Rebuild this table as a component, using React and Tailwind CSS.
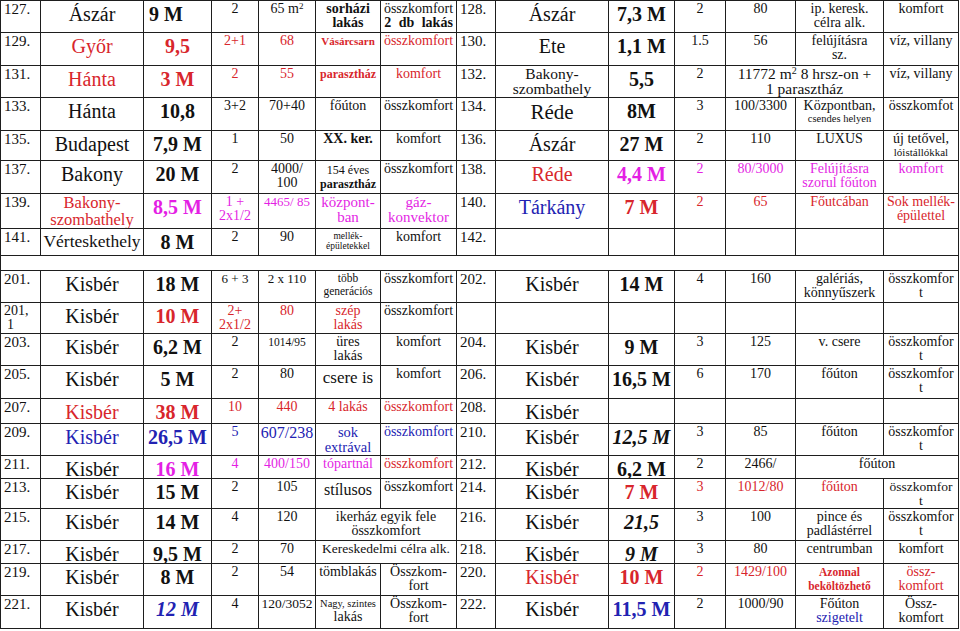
import React from "react";

// colours used in the listing
const R = "text-[#d8262c]";
const M = "text-[#e41fe4]";
const B = "text-[#2222b2]";

const num = "text-left pl-[3px] text-[15px] leading-[16px]";
const city = "text-[20px] leading-[16px] pt-[5px]";
const price = "font-bold text-[20px] leading-[16px] pt-[5px]";
const sm = "text-[14px] leading-[14px] pt-[1px]";

const C = ({ c = "", span = 1, children }) => (
  <td
    colSpan={span}
    className={`border border-[#1e1e1e] p-0 align-top text-center overflow-hidden ${c}`}
  >
    {children}
  </td>
);

const Br = () => <br />;

const App = () => {
  return (
    <div className="w-[960px] h-[631px] bg-white overflow-hidden">
      <table className="table-fixed border-collapse w-[958px] font-['Liberation_Serif',serif] text-[#111]">
        <colgroup>
          <col className="w-[40px]" />
          <col className="w-[103px]" />
          <col className="w-[68px]" />
          <col className="w-[47px]" />
          <col className="w-[57px]" />
          <col className="w-[65px]" />
          <col className="w-[76px]" />
          <col className="w-[39px]" />
          <col className="w-[113px]" />
          <col className="w-[66px]" />
          <col className="w-[51px]" />
          <col className="w-[70px]" />
          <col className="w-[88px]" />
          <col className="w-[75px]" />
        </colgroup>
        <tbody>
          {/* 127 / 128 */}
          <tr className="h-[32px]">
            <C c={num}>127.</C>
            <C c={city}>Ászár</C>
            <C c={`${price} text-left pl-[5px]`}>9 M</C>
            <C c={sm}>2</C>
            <C c={sm}>
              65 m<sup className="text-[9px]">2</sup>
            </C>
            <C c={`${sm} font-bold`}>
              sorházi
              <Br />
              lakás
            </C>
            <C c={sm}>
              összkomfort
              <Br />
              <span className="font-bold [word-spacing:4px]">2 db lakás</span>
            </C>
            <C c={num}>128.</C>
            <C c={city}>Ászár</C>
            <C c={price}>7,3 M</C>
            <C c={sm}>2</C>
            <C c={sm}>80</C>
            <C c={sm}>
              ip. keresk.
              <Br />
              célra alk.
            </C>
            <C c={sm}>komfort</C>
          </tr>

          {/* 129 / 130 */}
          <tr className="h-[33px]">
            <C c={num}>129.</C>
            <C c={`${city} ${R}`}>Győr</C>
            <C c={`${price} ${R}`}>9,5</C>
            <C c={`${sm} ${R}`}>2+1</C>
            <C c={`${sm} ${R}`}>68</C>
            <C c={`text-[11px] leading-[12px] pt-[2px] font-bold ${R}`}>Vásárcsarn</C>
            <C c={`${sm} ${R}`}>összkomfort</C>
            <C c={num}>130.</C>
            <C c={city}>Ete</C>
            <C c={price}>1,1 M</C>
            <C c={sm}>1.5</C>
            <C c={sm}>56</C>
            <C c={sm}>
              felújításra
              <Br />
              sz.
            </C>
            <C c={sm}>víz, villany</C>
          </tr>

          {/* 131 / 132 */}
          <tr className="h-[32px]">
            <C c={num}>131.</C>
            <C c={`${city} ${R}`}>Hánta</C>
            <C c={`${price} ${R}`}>3 M</C>
            <C c={`${sm} ${R}`}>2</C>
            <C c={`${sm} ${R}`}>55</C>
            <C c={`text-[12px] leading-[13px] pt-[2px] font-bold ${R}`}>parasztház</C>
            <C c={`${sm} ${R}`}>komfort</C>
            <C c={num}>132.</C>
            <C c="text-[15.5px] leading-[15px]">
              Bakony-
              <Br />
              szombathely
            </C>
            <C c={price}>5,5</C>
            <C c={sm}>2</C>
            <C span={2} c="text-[15.5px] leading-[15px]">
              11772 m<sup className="text-[10px]">2</sup> 8 hrsz-on +
              <Br />1 parasztház
            </C>
            <C c={sm}>víz, villany</C>
          </tr>

          {/* 133 / 134 */}
          <tr className="h-[33px]">
            <C c={num}>133.</C>
            <C c={city}>Hánta</C>
            <C c={price}>10,8</C>
            <C c={sm}>3+2</C>
            <C c={sm}>70+40</C>
            <C c={sm}>főúton</C>
            <C c={sm}>összkomfort</C>
            <C c={num}>134.</C>
            <C c="text-[21px] leading-[16px] pt-[6px]">Réde</C>
            <C c={price}>8M</C>
            <C c={sm}>3</C>
            <C c={sm}>100/3300</C>
            <C c={sm}>
              <div>Központban,</div>
              <div className="text-[10.5px] leading-[12px]">csendes helyen</div>
            </C>
            <C c={sm}>összkomfot</C>
          </tr>

          {/* 135 / 136 */}
          <tr className="h-[30px]">
            <C c={num}>135.</C>
            <C c={city}>Budapest</C>
            <C c={price}>7,9 M</C>
            <C c={sm}>1</C>
            <C c={sm}>50</C>
            <C c={`${sm} font-bold`}>XX. ker.</C>
            <C c={sm}>komfort</C>
            <C c={num}>136.</C>
            <C c={city}>Ászár</C>
            <C c={price}>27 M</C>
            <C c={sm}>2</C>
            <C c={sm}>110</C>
            <C c={sm}>LUXUS</C>
            <C c={sm}>
              <div>új tetővel,</div>
              <div className="text-[11px] leading-[12px]">lóistállókkal</div>
            </C>
          </tr>

          {/* 137 / 138 */}
          <tr className="h-[33px]">
            <C c={num}>137.</C>
            <C c={city}>Bakony</C>
            <C c={price}>20 M</C>
            <C c={sm}>2</C>
            <C c={sm}>
              4000/
              <Br />
              100
            </C>
            <C c="text-[12px] leading-[14px] pt-[2px]">
              <div>154 éves</div>
              <div className="font-bold">parasztház</div>
            </C>
            <C c={sm}>összkomfort</C>
            <C c={num}>138.</C>
            <C c={`${city} ${R}`}>Réde</C>
            <C c={`${price} ${M}`}>4,4 M</C>
            <C c={`${sm} ${M}`}>2</C>
            <C c={`${sm} ${M}`}>80/3000</C>
            <C c={`${sm} ${M}`}>
              Felújításra
              <Br />
              szorul főúton
            </C>
            <C c={`${sm} ${M}`}>komfort</C>
          </tr>

          {/* 139 / 140 */}
          <tr className="h-[35px]">
            <C c={num}>139.</C>
            <C c={`text-[16.5px] leading-[16.5px] pt-[1px] ${R}`}>
              Bakony-
              <Br />
              szombathely
            </C>
            <C c={`${price} ${M}`}>8,5 M</C>
            <C c={`${sm} ${M}`}>
              1 +
              <Br />
              2x1/2
            </C>
            <C c={`text-[13px] leading-[14px] pt-[1px] ${M}`}>4465/ 85</C>
            <C c={`text-[15px] leading-[15px] pt-[1px] ${M}`}>
              központ-
              <Br />
              ban
            </C>
            <C c={`text-[15px] leading-[15px] pt-[1px] ${M}`}>
              gáz-
              <Br />
              konvektor
            </C>
            <C c={num}>140.</C>
            <C c={`${city} ${B}`}>Tárkány</C>
            <C c={`${price} ${R}`}>7 M</C>
            <C c={`${sm} ${R}`}>2</C>
            <C c={`${sm} ${R}`}>65</C>
            <C c={`${sm} ${R}`}>Főutcában</C>
            <C c={`${sm} ${R}`}>
              Sok mellék-
              <Br />
              épülettel
            </C>
          </tr>

          {/* 141 / 142 */}
          <tr className="h-[27px]">
            <C c={num}>141.</C>
            <C c="text-[17.5px] leading-[16px] pt-[4px]">Vérteskethely</C>
            <C c={price}>8 M</C>
            <C c={sm}>2</C>
            <C c={sm}>90</C>
            <C c="text-[9.5px] leading-[10px] pt-[2px]">
              mellék-
              <Br />
              épületekkel
            </C>
            <C c={sm}>komfort</C>
            <C c={num}>142.</C>
            <C />
            <C />
            <C />
            <C />
            <C />
            <C />
          </tr>

          {/* gap between the two lists */}
          <tr className="h-[15px]">
            <C span={14} />
          </tr>

          {/* 201 / 202 */}
          <tr className="h-[32px]">
            <C c={num}>201.</C>
            <C c={city}>Kisbér</C>
            <C c={price}>18 M</C>
            <C c="text-[13px] leading-[14px] pt-[1px]">6 + 3</C>
            <C c="text-[13px] leading-[14px] pt-[1px]">2 x 110</C>
            <C c="text-[11.5px] leading-[13px] pt-[1px]">
              több
              <Br />
              generációs
            </C>
            <C c={sm}>összkomfort</C>
            <C c={num}>202.</C>
            <C c={city}>Kisbér</C>
            <C c={price}>14 M</C>
            <C c={sm}>4</C>
            <C c={sm}>160</C>
            <C c={sm}>
              galériás,
              <Br />
              könnyűszerk
            </C>
            <C c={sm}>
              összkomfor
              <Br />t
            </C>
          </tr>

          {/* 201,1 */}
          <tr className="h-[31px]">
            <C c="text-left pl-[3px] text-[14px] leading-[14px] pt-[1px]">
              201,
              <Br />
              <span className="pl-[3px]">1</span>
            </C>
            <C c={city}>Kisbér</C>
            <C c={`${price} ${R}`}>10 M</C>
            <C c={`${sm} ${R}`}>
              2+
              <Br />
              2x1/2
            </C>
            <C c={`${sm} ${R}`}>80</C>
            <C c={`${sm} ${R}`}>
              szép
              <Br />
              lakás
            </C>
            <C c={sm}>összkomfort</C>
            <C />
            <C />
            <C />
            <C />
            <C />
            <C />
            <C />
          </tr>

          {/* 203 / 204 */}
          <tr className="h-[32px]">
            <C c={num}>203.</C>
            <C c={city}>Kisbér</C>
            <C c={price}>6,2 M</C>
            <C c={sm}>2</C>
            <C c="text-[11.5px] leading-[14px] pt-[1px]">1014/95</C>
            <C c={sm}>
              üres
              <Br />
              lakás
            </C>
            <C c={sm}>komfort</C>
            <C c={num}>204.</C>
            <C c={city}>Kisbér</C>
            <C c={price}>9 M</C>
            <C c={sm}>3</C>
            <C c={sm}>125</C>
            <C c={sm}>v. csere</C>
            <C c={sm}>
              összkomfor
              <Br />t
            </C>
          </tr>

          {/* 205 / 206 */}
          <tr className="h-[33px]">
            <C c={num}>205.</C>
            <C c={city}>Kisbér</C>
            <C c={price}>5 M</C>
            <C c={sm}>2</C>
            <C c={sm}>80</C>
            <C c="text-[17px] leading-[17px] pt-[3px]">csere is</C>
            <C c={sm}>komfort</C>
            <C c={num}>206.</C>
            <C c={city}>Kisbér</C>
            <C c={price}>16,5 M</C>
            <C c={sm}>6</C>
            <C c={sm}>170</C>
            <C c={sm}>főúton</C>
            <C c={sm}>
              összkomfor
              <Br />t
            </C>
          </tr>

          {/* 207 / 208 */}
          <tr className="h-[25px]">
            <C c={num}>207.</C>
            <C c={`${city} ${R}`}>Kisbér</C>
            <C c={`${price} ${R}`}>38 M</C>
            <C c={`${sm} ${R}`}>10</C>
            <C c={`${sm} ${R}`}>440</C>
            <C c={`${sm} ${R}`}>4 lakás</C>
            <C c={`${sm} ${R}`}>összkomfort</C>
            <C c={num}>208.</C>
            <C c={city}>Kisbér</C>
            <C />
            <C />
            <C />
            <C />
            <C />
          </tr>

          {/* 209 / 210 */}
          <tr className="h-[32px]">
            <C c={num}>209.</C>
            <C c={`${city} ${B}`}>Kisbér</C>
            <C c={`${price} ${B}`}>26,5 M</C>
            <C c={`${sm} ${B}`}>5</C>
            <C c={`text-[16px] leading-[16px] pt-[1px] ${B}`}>607/238</C>
            <C c={`text-[14.5px] leading-[14.5px] pt-[1px] ${B}`}>
              sok
              <Br />
              extrával
            </C>
            <C c={`${sm} ${B}`}>összkomfort</C>
            <C c={num}>210.</C>
            <C c={city}>Kisbér</C>
            <C c={`${price} italic`}>12,5 M</C>
            <C c={sm}>3</C>
            <C c={sm}>85</C>
            <C c={sm}>főúton</C>
            <C c={sm}>
              összkomfor
              <Br />t
            </C>
          </tr>

          {/* 211 / 212 */}
          <tr className="h-[23px]">
            <C c={num}>211.</C>
            <C c={city}>Kisbér</C>
            <C c={`${price} ${M}`}>16 M</C>
            <C c={`${sm} ${M}`}>4</C>
            <C c={`${sm} ${M}`}>400/150</C>
            <C c={`${sm} ${M}`}>tópartnál</C>
            <C c={`${sm} ${R}`}>összkomfort</C>
            <C c={num}>212.</C>
            <C c={city}>Kisbér</C>
            <C c={price}>6,2 M</C>
            <C c={sm}>2</C>
            <C c={sm}>2466/</C>
            <C span={2} c={sm}>
              főúton
            </C>
          </tr>

          {/* 213 / 214 */}
          <tr className="h-[30px]">
            <C c={num}>213.</C>
            <C c={city}>Kisbér</C>
            <C c={price}>15 M</C>
            <C c={sm}>2</C>
            <C c={sm}>105</C>
            <C c="text-[16px] leading-[16px] pt-[3px]">stílusos</C>
            <C c={sm}>összkomfort</C>
            <C c={num}>214.</C>
            <C c={city}>Kisbér</C>
            <C c={`${price} ${R}`}>7 M</C>
            <C c={`${sm} ${R}`}>3</C>
            <C c={`${sm} ${R}`}>1012/80</C>
            <C c={`${sm} ${R}`}>főúton</C>
            <C c="text-[13.5px] leading-[13.5px] pt-[1px]">
              összkomfor
              <Br />t
            </C>
          </tr>

          {/* 215 / 216 */}
          <tr className="h-[32px]">
            <C c={num}>215.</C>
            <C c={city}>Kisbér</C>
            <C c={price}>14 M</C>
            <C c={sm}>4</C>
            <C c={sm}>120</C>
            <C span={2} c={sm}>
              ikerház egyik fele
              <Br />
              összkomfort
            </C>
            <C c={num}>216.</C>
            <C c={city}>Kisbér</C>
            <C c={`${price} italic`}>21,5</C>
            <C c={sm}>3</C>
            <C c={sm}>100</C>
            <C c={sm}>
              pince és
              <Br />
              padlástérrel
            </C>
            <C c={sm}>
              összkomfor
              <Br />t
            </C>
          </tr>

          {/* 217 / 218 */}
          <tr className="h-[23px]">
            <C c={num}>217.</C>
            <C c={city}>Kisbér</C>
            <C c={price}>9,5 M</C>
            <C c={sm}>2</C>
            <C c={sm}>70</C>
            <C span={2} c="text-[13.5px] leading-[14px] pt-[1px]">
              Kereskedelmi célra alk.
            </C>
            <C c={num}>218.</C>
            <C c={city}>Kisbér</C>
            <C c={`${price} italic`}>9 M</C>
            <C c={sm}>3</C>
            <C c={sm}>80</C>
            <C c={sm}>centrumban</C>
            <C c={sm}>komfort</C>
          </tr>

          {/* 219 / 220 */}
          <tr className="h-[32px]">
            <C c={num}>219.</C>
            <C c={city}>Kisbér</C>
            <C c={price}>8 M</C>
            <C c={sm}>2</C>
            <C c={sm}>54</C>
            <C c={sm}>tömblakás</C>
            <C c={sm}>
              Összkom-
              <Br />
              fort
            </C>
            <C c={num}>220.</C>
            <C c={`${city} ${R}`}>Kisbér</C>
            <C c={`${price} ${R}`}>10 M</C>
            <C c={`${sm} ${R}`}>2</C>
            <C c={`${sm} ${R}`}>1429/100</C>
            <C c={`text-[11.5px] leading-[14px] pt-[1px] font-bold ${R}`}>
              Azonnal
              <Br />
              beköltözhető
            </C>
            <C c={`${sm} ${R}`}>
              össz-
              <Br />
              komfort
            </C>
          </tr>

          {/* 221 / 222 */}
          <tr className="h-[33px]">
            <C c={num}>221.</C>
            <C c={city}>Kisbér</C>
            <C c={`${price} italic ${B}`}>12 M</C>
            <C c={sm}>4</C>
            <C c="text-[13.5px] leading-[14px] pt-[1px]">120/3052</C>
            <C c={sm}>
              <div className="text-[10.5px] leading-[13px]">Nagy, szintes</div>
              <div>lakás</div>
            </C>
            <C c={sm}>
              Összkom-
              <Br />
              fort
            </C>
            <C c={num}>222.</C>
            <C c={city}>Kisbér</C>
            <C c={`${price} ${B}`}>11,5 M</C>
            <C c={sm}>2</C>
            <C c={sm}>1000/90</C>
            <C c={sm}>
              Főúton
              <Br />
              <span className={B}>szigetelt</span>
            </C>
            <C c={sm}>
              Össz-
              <Br />
              komfort
            </C>
          </tr>
        </tbody>
      </table>
    </div>
  );
};

export default App;
